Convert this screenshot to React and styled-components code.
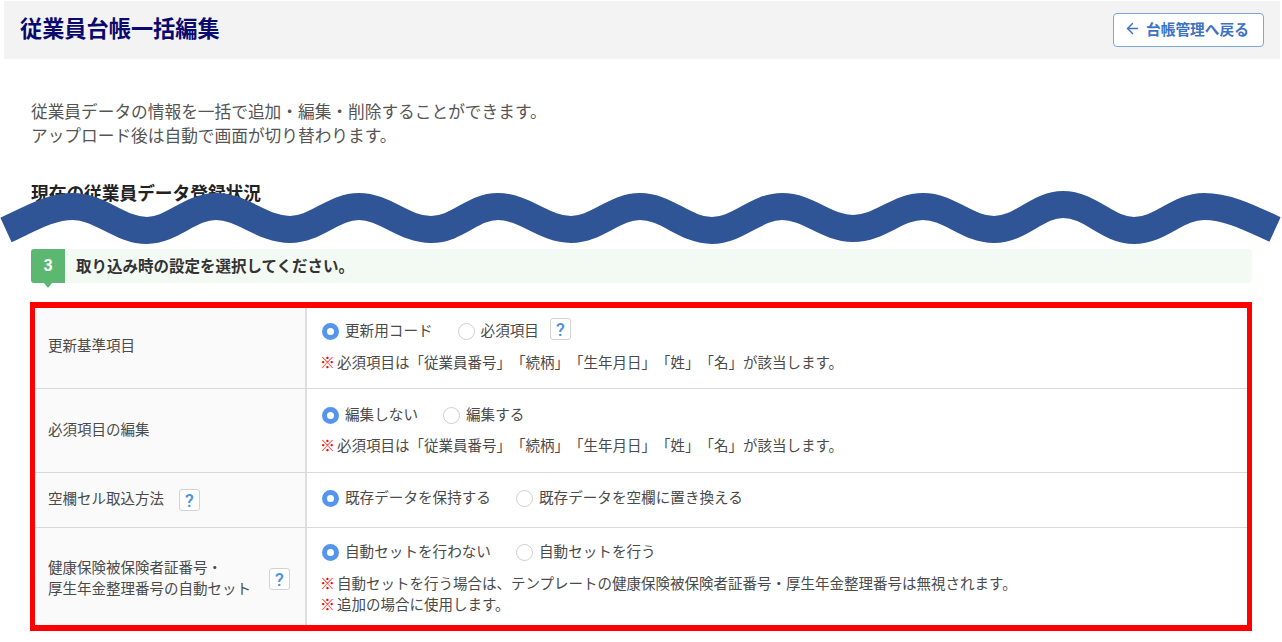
import styled, { createGlobalStyle } from "styled-components"
import { ArrowLeft } from "lucide-react"

const GlobalStyle = createGlobalStyle`
* {
    box-sizing: border-box;
}
body {
    margin: 0;
    background: #FFFFFF;
    color: #4A4A4A;
    font-family: "Noto Sans CJK JP", "Noto Sans", sans-serif;
    text-spacing-trim: space-all;
}
`

const requiredNote = "必須項目は「従業員番号」「続柄」「生年月日」「姓」「名」が該当します。"

export default function App() {
    return (
        <Page>
            <GlobalStyle />
            <Header>
                <Title>従業員台帳一括編集</Title>
                <BackButton>
                    <ArrowLeft size={17} strokeWidth={2} />
                    台帳管理へ戻る
                </BackButton>
            </Header>

            <Main>
                <Description>
                    従業員データの情報を一括で追加・編集・削除することができます。
                    <br />
                    アップロード後は自動で画面が切り替わります。
                </Description>
                <Heading>現在の従業員データ登録状況</Heading>

                <StepBar>
                    <StepNumber>3</StepNumber>
                    <StepText>取り込み時の設定を選択してください。</StepText>
                </StepBar>

                <Frame>
                    <Row $height={81}>
                        <LabelCell>
                            <LabelText $lift={8}>更新基準項目</LabelText>
                        </LabelCell>
                        <ValueCell $top={12}>
                            <Options>
                                <Option label="更新用コード" name="base" checked />
                                <Option label="必須項目" name="base" help />
                            </Options>
                            <Notes $top={9}>
                                <Note>{requiredNote}</Note>
                            </Notes>
                        </ValueCell>
                    </Row>
                    <Row $height={84}>
                        <LabelCell>
                            <LabelText $lift={4}>必須項目の編集</LabelText>
                        </LabelCell>
                        <ValueCell $top={15}>
                            <Options>
                                <Option label="編集しない" name="edit" checked />
                                <Option label="編集する" name="edit" />
                            </Options>
                            <Notes $top={8}>
                                <Note>{requiredNote}</Note>
                            </Notes>
                        </ValueCell>
                    </Row>
                    <Row $height={55}>
                        <LabelCell>
                            <LabelText $lift={6}>空欄セル取込方法</LabelText>
                            <LabelHelp $left={15}>?</LabelHelp>
                        </LabelCell>
                        <ValueCell $top={14}>
                            <Options>
                                <Option label="既存データを保持する" name="blank" checked />
                                <Option label="既存データを空欄に置き換える" name="blank" />
                            </Options>
                        </ValueCell>
                    </Row>
                    <Row $height={97} $last>
                        <LabelCell>
                            <LabelText>
                                健康保険被保険者証番号・
                                <br />
                                厚生年金整理番号の自動セット
                            </LabelText>
                            <LabelHelp $left={18} $down={5}>?</LabelHelp>
                        </LabelCell>
                        <ValueCell $top={13}>
                            <Options>
                                <Option label="自動セットを行わない" name="auto" checked />
                                <Option label="自動セットを行う" name="auto" />
                            </Options>
                            <Notes $top={9}>
                                <Note>自動セットを行う場合は、テンプレートの健康保険被保険者証番号・厚生年金整理番号は無視されます。</Note>
                                <Note>追加の場合に使用します。</Note>
                            </Notes>
                        </ValueCell>
                    </Row>
                </Frame>
            </Main>

            <Wave viewBox="0 0 1282 642" width="1282" height="642">
                <path
                    d="M6 230 C 30 219 50 206.5 73 206.5 C 100 206.5 120 230.5 147 230.5 C 172 230.5 190 206.5 216 206.5 C 243 206.5 262 229.5 290 229.5 C 316 229.5 333 206.5 359 206.5 C 385 206.5 404 229.5 431 229.5 C 458 229.5 472 206.5 498 206.5 C 525 206.5 544 229.5 571 229.5 C 597 229.5 614 206.5 640 206.5 C 667 206.5 685 230.5 712 230.5 C 738 230.5 756 206.5 782 206.5 C 809 206.5 826 228.5 853 228.5 C 880 228.5 897 206.5 923 206.5 C 950 206.5 967 229.5 994 229.5 C 1021 229.5 1037 204.5 1063 204.5 C 1091 204.5 1107 230.5 1134 230.5 C 1161 230.5 1177 206.5 1204 206.5 C 1229 206.5 1252 219 1275 229.5"
                    fill="none"
                    stroke="#2F5597"
                    strokeWidth="27"
                />
            </Wave>
        </Page>
    )
}

function Option({ label, name, checked, help }) {
    return (
        <OptionLabel>
            <Radio type="radio" name={name} defaultChecked={checked} />
            <OptionText>{label}</OptionText>
            {help && <Help $left={5} $up={4}>?</Help>}
        </OptionLabel>
    )
}

const Page = styled.div`
position: relative;
width: 1282px;
height: 642px;
padding-top: 1px;
overflow: hidden;
`

const Header = styled.header`
display: flex;
align-items: center;
justify-content: space-between;
height: 58px;
margin-left: 4px;
width: 1276px;
padding: 0 16px 0 16px;
background: #F3F3F3;
`

const Title = styled.h1`
margin: 0 0 7px;
color: #0A0A6E;
font-size: 22.2px;
font-weight: 700;
line-height: 30px;
`

const BackButton = styled.button`
display: flex;
align-items: center;
gap: 5px;
width: 151px;
height: 34px;
margin-bottom: 1px;
padding: 0 0 2px 10px;
background: #FFFFFF;
border: 1px solid #7FA3DC;
border-radius: 4px;
color: #3E73C4;
font-family: inherit;
font-size: 14.7px;
font-weight: 700;
white-space: nowrap;
`

const Main = styled.main`
padding: 40px 30px 0;
`

const Description = styled.p`
margin: 0 0 0 1px;
font-size: 16.7px;
line-height: 24px;
color: #555555;
`

const Heading = styled.h2`
margin: 33px 0 0 1px;
color: #222222;
font-size: 17.7px;
font-weight: 700;
line-height: 24px;
`

const StepBar = styled.div`
display: flex;
align-items: center;
gap: 11px;
width: 1221px;
height: 34px;
margin: 45px 0 0 1px;
background: #F3FAF4;
border-radius: 4px;
`

const StepNumber = styled.div`
position: relative;
display: flex;
align-items: center;
justify-content: center;
width: 34px;
height: 34px;
padding-bottom: 2px;
background: #5CB870;
border-radius: 3px 0 0 3px;
color: #FFFFFF;
font-family: "Roboto", sans-serif;
font-size: 16px;
font-weight: 700;
&::after {
    content: "";
    position: absolute;
    top: 100%;
    left: 13px;
    border-style: solid;
    border-width: 5px 4px 0;
    border-color: #5CB870 transparent transparent;
}
`

const StepText = styled.div`
margin-bottom: 3px;
color: #333333;
font-size: 15.5px;
font-weight: 700;
`

const Frame = styled.section`
width: 1222px;
height: 329px;
margin-top: 19px;
border: 5px solid #FF0000;
border-top-width: 6px;
border-bottom-width: 6px;
`

const Row = styled.div`
display: grid;
grid-template-columns: 272px 1fr;
height: ${(props) => props.$height}px;
border-bottom: ${(props) => (props.$last ? "none" : "1px solid #D9D9D9")};
`

const LabelCell = styled.div`
display: flex;
align-items: center;
padding-left: 13px;
background: #FAFAFA;
border-right: 2px solid #DEDEDE;
color: #4A4A4A;
font-size: 14.5px;
line-height: 21px;
`

const LabelText = styled.span`
margin-bottom: ${(props) => props.$lift || 0}px;
`

const ValueCell = styled.div`
padding: ${(props) => props.$top}px 0 0 15px;
`

const Options = styled.div`
display: flex;
align-items: center;
gap: 25px;
height: 22px;
`

const OptionLabel = styled.label`
display: flex;
align-items: center;
gap: 6px;
color: #4A4A4A;
font-size: 14.6px;
white-space: nowrap;
`

const OptionText = styled.span`
margin-bottom: 3px;
`

const Radio = styled.input`
appearance: none;
flex: none;
width: 17px;
height: 17px;
margin: 0;
background: #FFFFFF;
border: 1px solid #CFCFCF;
border-radius: 50%;
&:checked {
    background: #FFFFFF;
    border: 5.5px solid #5596EC;
}
`

const Help = styled.span`
display: flex;
align-items: center;
justify-content: center;
flex: none;
width: 21px;
height: 22px;
margin-left: ${(props) => props.$left}px;
margin-bottom: ${(props) => props.$up || 0}px;
margin-top: ${(props) => props.$down || 0}px;
background: #FFFFFF;
border: 1px solid #D2D2D2;
border-radius: 3px;
color: #4A90E2;
font-family: "Roboto", sans-serif;
font-size: 18px;
font-weight: 500;
`

const LabelHelp = styled(Help)``

const Notes = styled.div`
margin-top: ${(props) => props.$top}px;
`

const Note = styled.p`
margin: 0 0 0 -2px;
color: #4A4A4A;
font-size: 14.5px;
line-height: 21px;
white-space: nowrap;
&::before {
    content: "※";
    color: #FF0000;
    font-size: 15px;
    font-weight: 900;
    margin-right: 2px;
}
`

const Wave = styled.svg`
position: absolute;
top: 0;
left: 0;
pointer-events: none;
`
